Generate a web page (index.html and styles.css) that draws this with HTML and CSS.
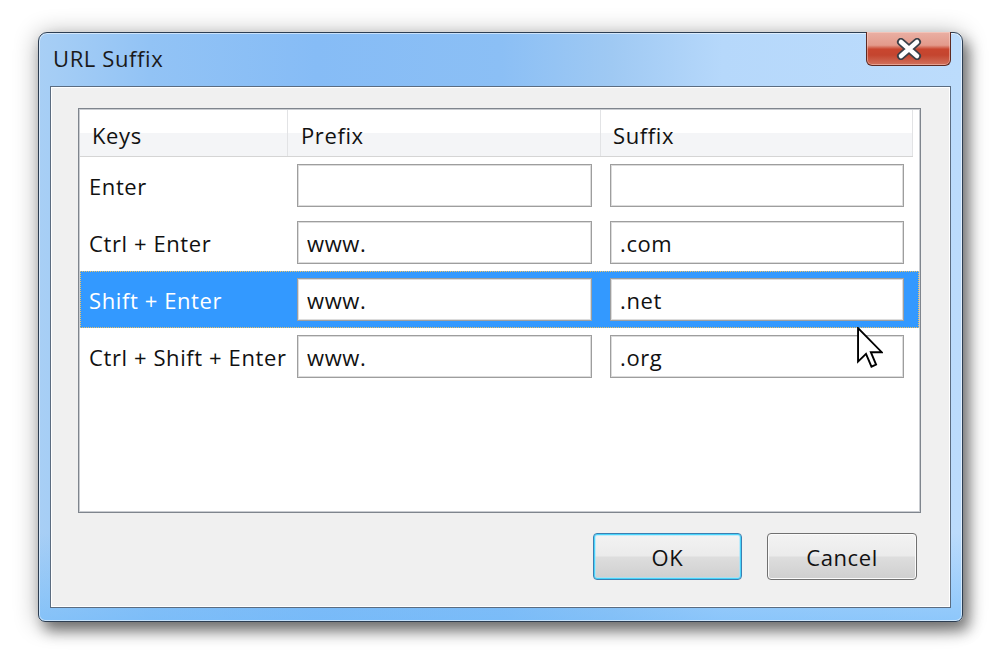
FILE: index.html
```html
<!DOCTYPE html>
<html lang="en">
<head>
    <meta charset="UTF-8">
    <title>URL Suffix</title>
    <link rel="stylesheet" href="styles.css">
</head>
<body>
    <div class="window">
        <div class="titlebar">
            <span class="title">URL Suffix</span>
            <button class="close-btn" aria-label="Close">
                <svg width="26" height="22" viewBox="0 0 26 22">
                    <path d="M5 4 L21 18 M21 4 L5 18" stroke="#3b4048" stroke-width="8" stroke-linecap="round"/>
                    <path d="M5 4 L21 18 M21 4 L5 18" stroke="#ffffff" stroke-width="4.5" stroke-linecap="round"/>
                </svg>
            </button>
        </div>

        <div class="client">
            <div class="listview">
                <div class="lv-header">
                    <div class="col-head">Keys</div>
                    <div class="col-head">Prefix</div>
                    <div class="col-head">Suffix</div>
                </div>

                <div class="lv-row">
                    <div class="key">Enter</div>
                    <div class="cell"><input type="text" value=""></div>
                    <div class="cell"><input type="text" value=""></div>
                </div>
                <div class="lv-row">
                    <div class="key">Ctrl + Enter</div>
                    <div class="cell"><input type="text" value="www."></div>
                    <div class="cell"><input type="text" value=".com"></div>
                </div>
                <div class="lv-row selected">
                    <div class="key">Shift + Enter</div>
                    <div class="cell"><input type="text" value="www."></div>
                    <div class="cell"><input type="text" value=".net"></div>
                </div>
                <div class="lv-row">
                    <div class="key">Ctrl + Shift + Enter</div>
                    <div class="cell"><input type="text" value="www."></div>
                    <div class="cell"><input type="text" value=".org"></div>
                </div>
            </div>

            <div class="buttons">
                <button class="btn btn-default">OK</button>
                <button class="btn">Cancel</button>
            </div>
        </div>
    </div>

    <!-- mouse pointer over the suffix column -->
    <svg class="cursor" width="26" height="42" viewBox="0 0 12.4 20">
        <path d="M0.5 0.5 L0.5 16.5 L4.3 12.8 L6.9 18.9 L9.1 17.9 L6.6 12 L11.8 12 Z" fill="#fff" stroke="#000" stroke-width="0.9" stroke-linejoin="miter"/>
    </svg>
</body>
</html>
```

FILE: styles.css
```css
* {
    margin: 0;
    padding: 0;
    box-sizing: border-box;
    font-family: 'Open Sans', 'Noto Sans', sans-serif;
}

body {
    background: #ffffff;
    width: 1000px;
    height: 658px;
    overflow: hidden;
    position: relative;
}

.window {
    margin: 32px 0 0 38px;
    width: 925px;
    height: 590px;
    padding: 0 11px 13px 11px;
    border: 1px solid #2d3e52;
    border-radius: 9px 9px 7px 7px;
    background:
        linear-gradient(180deg, rgba(255, 255, 255, 0) 85%, rgba(110, 185, 250, 0.6) 100%),
        linear-gradient(90deg, #a8cff5 0%, #92c3f5 12%, #86bcf6 30%, #8bbff5 50%, #9fc9f3 62%, #b6d8fb 74%, #bcdcfc 100%);
    box-shadow:
        inset 0 0 0 1px rgba(255, 255, 255, 0.55),
        6px 9px 14px rgba(0, 0, 0, 0.45),
        0 2px 24px rgba(0, 0, 0, 0.32);
    display: flex;
    flex-direction: column;
}

.titlebar {
    height: 53px;
    display: flex;
    justify-content: space-between;
    align-items: flex-start;
    padding-left: 3px;
}

.title {
    margin-top: 10px;
    font-size: 22px;
    letter-spacing: 0.6px;
    color: #1a1a1a;
}

.close-btn {
    margin-top: -1px;
    width: 85px;
    height: 34px;
    border: 1px solid #5e2a22;
    border-top: none;
    border-radius: 0 0 6px 6px;
    background: linear-gradient(180deg, #eab0a4 0%, #e39a8b 40%, #c9462f 52%, #c4452f 70%, #d2725d 100%);
    box-shadow: inset 0 0 0 1px rgba(255, 220, 210, 0.45);
    display: flex;
    align-items: center;
    justify-content: center;
}

.client {
    flex: 1;
    background: #f0f0f0;
    border: 1px solid #5b6c80;
    box-shadow: inset 0 0 0 1px #ffffff;
    padding: 21px 29px 0 27px;
    display: flex;
    flex-direction: column;
}

.listview {
    height: 405px;
    background: #ffffff;
    border: 1px solid #7f858d;
    box-shadow: inset 0 0 0 1px #c9ccd1;
    padding: 1px;
}

.lv-header {
    height: 47px;
    width: 833px;
    display: grid;
    grid-template-columns: 208px 313px 312px;
    border-bottom: 1px solid #d5d5d5;
    background: linear-gradient(180deg, #ffffff 50%, #f4f5f7 50%);
}

.col-head {
    font-size: 22px;
    letter-spacing: 0.6px;
    color: #111;
    padding: 4px 0 0 12px;
    display: flex;
    align-items: center;
    border-right: 1px solid #e2e3e5;
}

.col-head:nth-child(2) {
    padding-left: 13px;
}

.lv-row {
    height: 57px;
    display: grid;
    grid-template-columns: 208px 313px 312px 1fr;
    align-items: center;
}

.key {
    font-size: 22px;
    letter-spacing: 0.6px;
    color: #111;
    padding-left: 9px;
    white-space: nowrap;
}

.cell {
    padding: 0 9px;
}

.cell input {
    width: 100%;
    height: 43px;
    border: 1px solid #9e9e9e;
    box-shadow: inset 0 0 0 1px #dcdcdc;
    background: #ffffff;
    font-size: 22px;
    letter-spacing: 0.6px;
    color: #111;
    padding: 0 9px;
    outline: none;
}

.lv-row.selected {
    background: #3399ff;
    outline: 1px dotted #f0c264;
    outline-offset: -1px;
}

.lv-row.selected .key {
    color: #ffffff;
}

.buttons {
    display: flex;
    justify-content: flex-end;
    gap: 25px;
    margin-top: 20px;
    padding-right: 4px;
}

.btn {
    width: 150px;
    height: 47px;
    font-size: 22px;
    letter-spacing: 0.6px;
    color: #111;
    border: 1px solid #707070;
    border-radius: 4px;
    background: linear-gradient(180deg, #f3f3f3 0%, #ebebeb 48%, #dddddd 52%, #cfcfcf 100%);
    box-shadow: inset 0 0 0 1px #fbfbfb;
}

.btn-default {
    width: 149px;
    border-color: #3c7fb1;
    box-shadow: inset 0 0 0 1px #48d4fb, inset 0 0 0 2px rgba(160, 230, 255, 0.6);
}

.cursor {
    position: absolute;
    left: 857px;
    top: 327px;
}
```
